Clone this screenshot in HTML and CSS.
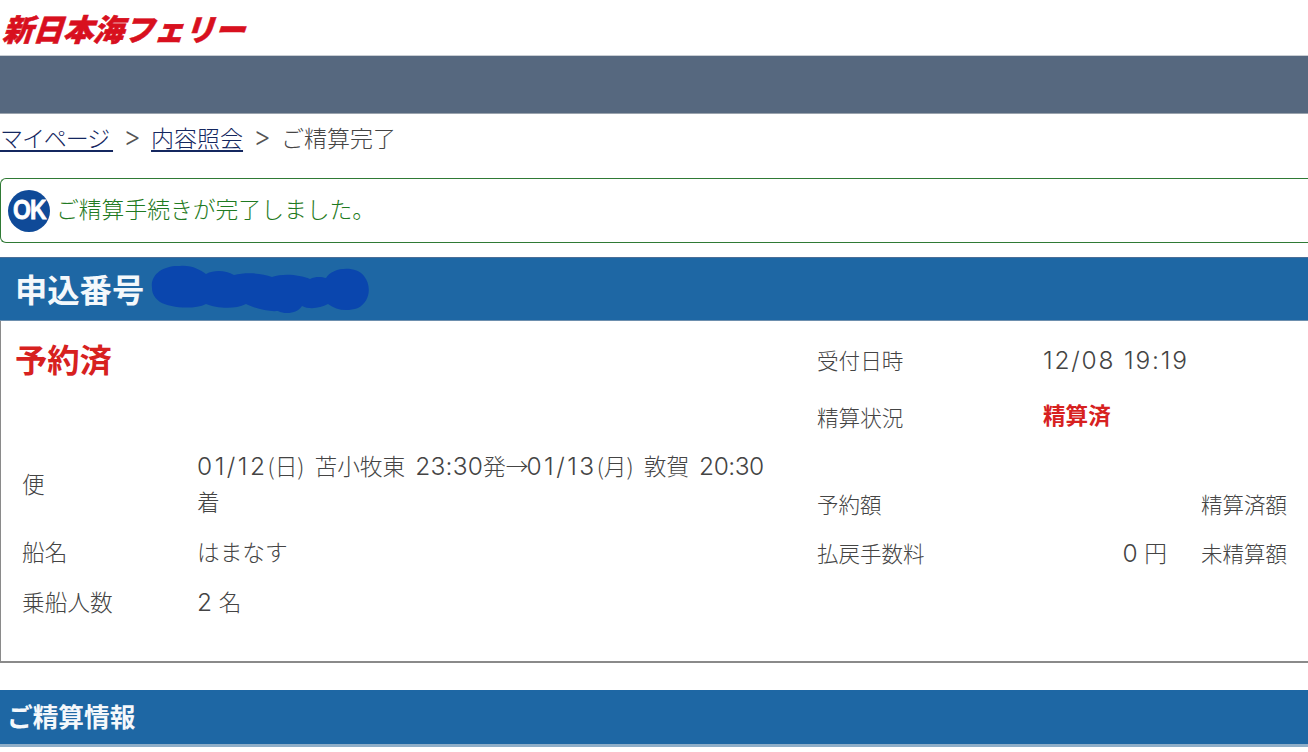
FILE: index.html
```html
<!DOCTYPE html>
<html lang="ja">
<head>
<meta charset="utf-8">
<title>ご精算完了</title>
<link rel="stylesheet" href="styles.css">
</head>
<body>
<header class="brand"><span class="logo">新日本海フェリー</span></header>
<div class="band"></div>
<nav class="crumbs"><a class="first" href="#">マイページ </a><span class="sep">&gt;</span><a href="#">内容照会</a><span class="sep">&gt;</span><span>ご精算完了</span></nav>
<div class="alert"><span class="ok"><span class="ok-text">OK</span></span><span class="alert-text">ご精算手続きが完了しました。</span></div>
<section class="panel">
  <h2 class="panel-head"><span>申込番号</span>
    <svg class="scribble" viewBox="0 0 220 50" width="220" height="50"><path d="M2 24C0 10 14 1 30 2C42 1 50 6 56 10C66 5 76 7 84 11C96 8 112 9 122 13C134 9 150 11 160 15C166 12 172 13 176 14C182 3 206 1 214 12C222 22 220 38 208 44C196 48 186 46 178 40C170 44 160 46 152 42C148 49 136 51 128 47C118 48 104 44 96 40C84 46 66 44 56 40C44 46 20 44 10 38C5 34 2 30 2 24Z"/></svg>
  </h2>
  <div class="panel-body">
    <div class="left">
      <div class="status">予約済</div>
      <dl class="facts">
        <dt>便</dt><dd class="route"><span class="num date">01/12</span>(日) 苫小牧東 <span class="num time">23:30</span>発<span class="arrow">→</span><span class="num date">01/13</span>(月) 敦賀 <span class="num last">20:30</span> 着</dd>
        <dt>船名</dt><dd>はまなす</dd>
        <dt>乗船人数</dt><dd><span class="num">2</span> 名</dd>
      </dl>
    </div>
    <div class="right">
      <dl class="meta">
        <dt>受付日時</dt><dd><span class="num stamp">12/08 19:19</span></dd>
        <dt>精算状況</dt><dd class="paid">精算済</dd>
      </dl>
      <div class="amounts">
        <span class="lbl">予約額</span><span class="amt"></span><span class="lbl">精算済額</span>
        <span class="lbl">払戻手数料</span><span class="amt"><span class="num">0</span> 円</span><span class="lbl">未精算額</span>
      </div>
    </div>
  </div>
</section>
<h2 class="section-head">ご精算情報</h2>
</body>
</html>
```
FILE: styles.css
```css
html, body { margin: 0; padding: 0; height: 752px; overflow: hidden; background: #fff; }
body { font-family: "Noto Sans CJK JP", sans-serif; font-weight: 300; color: #444; font-size: 22.7px; }
.num { font-family: Inter, "Liberation Sans", sans-serif; font-weight: 300; font-size: 24.5px; letter-spacing: 1.6px; }
.num.date { letter-spacing: 2.5px; }
.num.time { letter-spacing: .2px; }
.num.last { letter-spacing: -.5px; }
.num.stamp { letter-spacing: 1.8px; }
.arrow { letter-spacing: -2px; }
.brand { height: 55px; box-sizing: border-box; padding-top: 9px; overflow: hidden; }
.logo { display: inline-block; font-weight: 900; font-size: 30.3px; line-height: 38px; color: #d8101e; -webkit-text-stroke: .6px #d8101e; transform: skewX(-18deg); transform-origin: 0 100%; white-space: nowrap; }
.band { height: 59px; background: #56687f; border-top: 1px solid #c9ced4; border-bottom: 1px solid #9aa3ad; box-sizing: border-box; }
.crumbs { height: 64px; box-sizing: border-box; padding-top: 6px; line-height: 34px; display: flex; white-space: pre; font-size: 23px; }
.crumbs a { color: #14275f; text-decoration: underline; text-underline-offset: 3px; }
.crumbs .first { letter-spacing: -1.1px; }
.sep { width: 38px; text-align: center; font-family: Inter, "Liberation Sans", sans-serif; font-weight: 300; font-size: 27px; color: #555; }
.alert { height: 65px; box-sizing: border-box; border: 1px solid #2f7a35; border-right: 0; border-radius: 6px 0 0 6px; display: flex; align-items: center; padding-left: 7px; gap: 6px; color: #1f7a22; font-size: 22.8px; }
.alert-text { margin-top: -4px; }
.ok { width: 42px; height: 42px; border-radius: 50%; background: #0f4a98; color: #fff; display: flex; align-items: center; justify-content: center; flex: none; }
.ok-text { font-family: "Liberation Sans", sans-serif; font-weight: 700; font-size: 27px; letter-spacing: -1px; -webkit-text-stroke: .8px #fff; transform: scaleX(.85); }
.panel { margin-top: 14px; height: 406px; box-sizing: border-box; border-left: 1px solid #8a8a8a; border-bottom: 2px solid #8a8a8a; }
.panel-head { margin: 0 0 0 -1px; height: 64px; background: #1e67a4; border-top: 1px solid #4a6f98; border-bottom: 1px solid #6d8fae; box-sizing: border-box; color: #f4f8fb; font-size: 32.3px; font-weight: 700; padding-left: 15px; display: flex; align-items: center; gap: 6px; }
.panel-head span { margin-top: -3px; }
.scribble { fill: #0a46ae; flex: none; }
.panel-body { display: flex; }
.left { width: 816px; box-sizing: border-box; padding-left: 14px; flex: none; }
.status { color: #d7211f; font-size: 32.3px; font-weight: 700; line-height: 40px; margin-top: 17px; }
.facts { display: grid; grid-template-columns: 175px 576px; margin: 70px 0 0 7px; align-items: center; row-gap: 14px; }
.facts dt { line-height: 36px; }
.facts dd { margin: 0; line-height: 36px; }
.facts .route { word-spacing: 5px; }
.right { flex: 1; min-width: 0; padding-top: 21px; }
.meta { display: grid; grid-template-columns: 226px 1fr; margin: 0; row-gap: 21px; line-height: 36px; }
.meta dt { font-size: 21.6px; }
.meta dd { margin: 0; }
.meta .paid { margin: -2px 0 2px; color: #d7211f; font-weight: 700; font-size: 22.6px; }
.amounts { display: grid; grid-template-columns: 350px 34px 1fr; margin-top: 51px; row-gap: 13px; line-height: 36px; white-space: nowrap; }
.lbl { font-size: 21.5px; }
.amt { text-align: right; grid-column: 1; grid-row: 2; }
.amounts .lbl:nth-child(1) { grid-column: 1; grid-row: 1; }
.amounts .lbl:nth-child(3) { grid-column: 3; grid-row: 1; }
.amounts .amt:nth-child(2) { grid-row: 1; }
.amounts .lbl:nth-child(4) { grid-column: 1; grid-row: 2; }
.amounts .lbl:nth-child(6) { grid-column: 3; grid-row: 2; }
.section-head { margin: 27px 0 0; height: 54px; background: #1e67a4; border-bottom: 3px solid #8faec8; color: #f4f8fb; font-size: 25.7px; font-weight: 700; padding-left: 7px; line-height: 52px; }
```
